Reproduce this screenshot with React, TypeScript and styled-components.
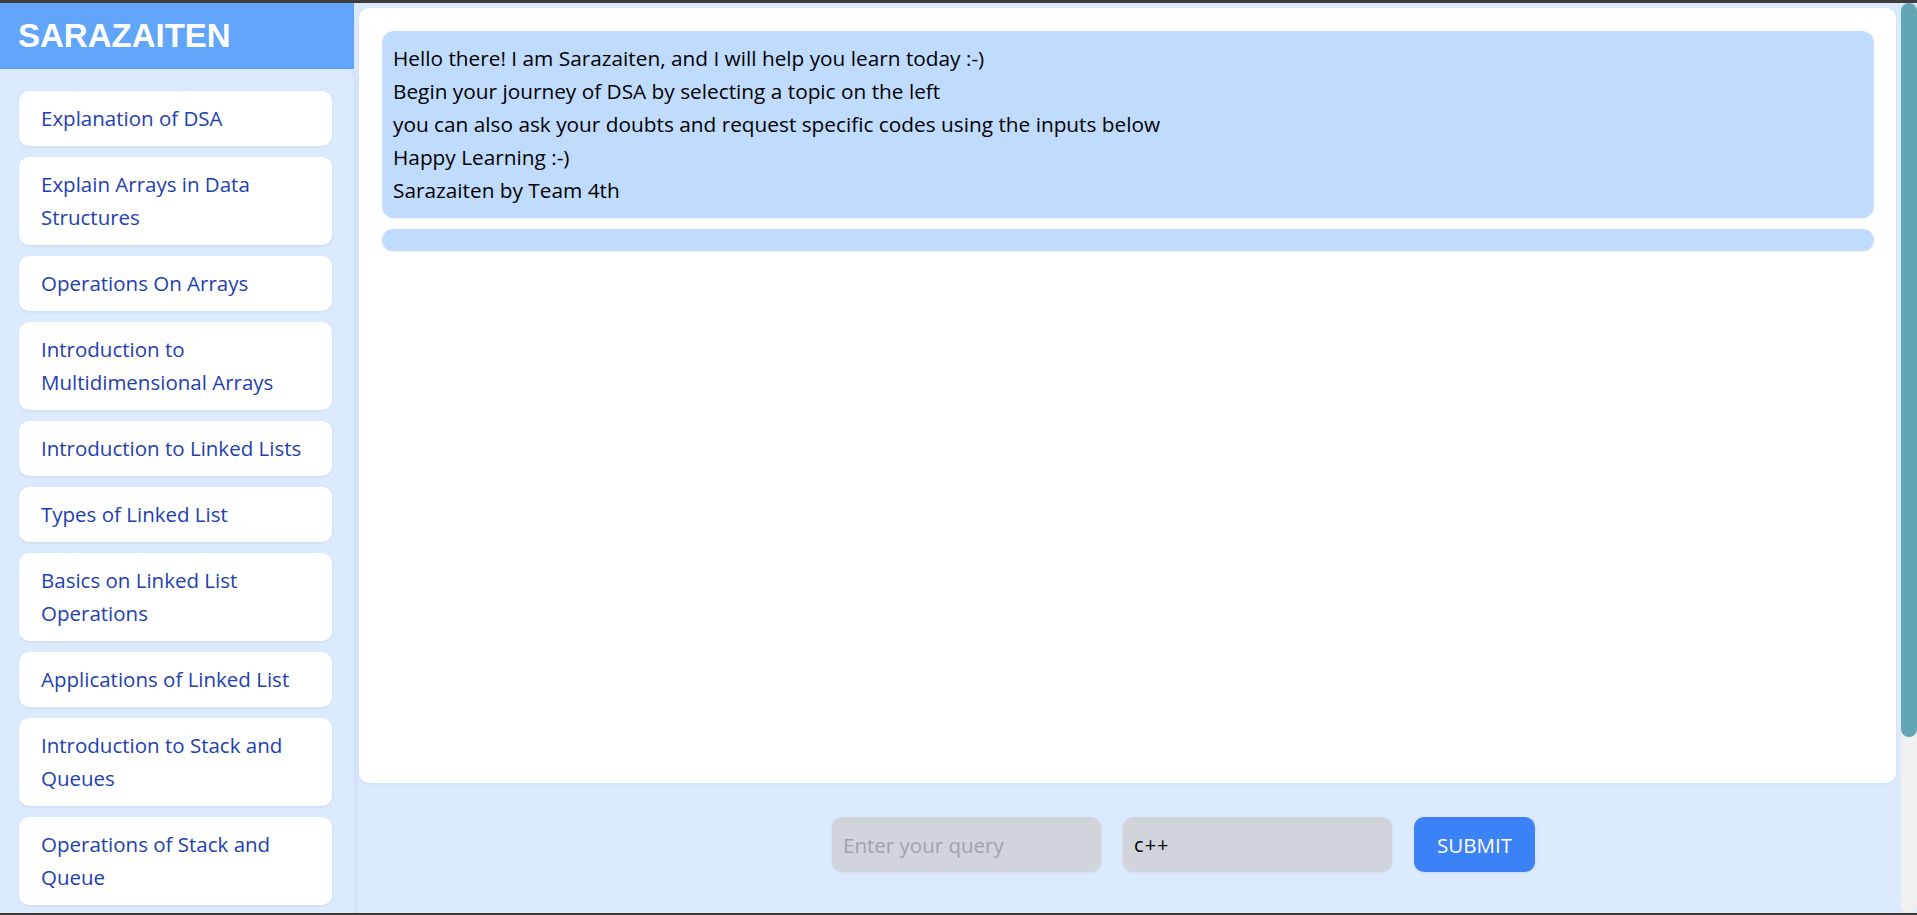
import React from 'react';
import styled, { createGlobalStyle } from 'styled-components';

const topics = [
  'Explanation of DSA',
  'Explain Arrays in Data Structures',
  'Operations On Arrays',
  'Introduction to Multidimensional Arrays',
  'Introduction to Linked Lists',
  'Types of Linked List',
  'Basics on Linked List Operations',
  'Applications of Linked List',
  'Introduction to Stack and Queues',
  'Operations of Stack and Queue',
];

const greeting = [
  'Hello there! I am Sarazaiten, and I will help you learn today :-)',
  'Begin your journey of DSA by selecting a topic on the left',
  'you can also ask your doubts and request specific codes using the inputs below',
  'Happy Learning :-)',
  'Sarazaiten by Team 4th',
];

const GlobalStyle = createGlobalStyle`
  html, body {
    margin: 0;
    padding: 0;
    height: 100%;
    overflow: hidden;
  }
  * {
    box-sizing: border-box;
  }
`;

// window frame: dark edges top and bottom, page + scroll rail in between
const Frame = styled.div`
  height: 100vh;
  display: flex;
  border-top: 3px solid #3d3d3d;
  border-bottom: 2px solid #3a3a3a;
  background: #dbeafe;
  font-family: 'Open Sans', 'Noto Sans', sans-serif;
`;

const Scroller = styled.div`
  flex: 1;
  height: 100%;
  overflow-y: auto;
  scrollbar-width: none;

  &::-webkit-scrollbar {
    display: none;
  }
`;

const Rail = styled.div`
  width: 16px;
  flex-shrink: 0;
  background: #f0f0f0;
  border-radius: 8px;
`;

const Thumb = styled.div`
  height: 734px;
  background: #62a5b5;
  border-radius: 8px;
`;

const Layout = styled.div`
  display: grid;
  grid-template-columns: 354px 1fr;
  align-items: start;
`;

const Sidebar = styled.aside`
  display: flex;
  flex-direction: column;
`;

const Brand = styled.header`
  height: 66px;
  display: flex;
  align-items: center;
  padding-left: 18px;
  background: #60a5fa;

  h1 {
    margin: 0;
    color: #fff;
    font-family: 'Liberation Sans', Arial, sans-serif;
    font-size: 33px;
    font-weight: 700;
  }
`;

const TopicList = styled.nav`
  display: flex;
  flex-direction: column;
  gap: 11px;
  padding: 22px 22px 22px 19px;
  background: #dbeafe;
  border-top-right-radius: 10px;
  box-shadow: 3px 0 4px rgba(30, 64, 175, 0.06);
`;

const TopicCard = styled.button`
  display: block;
  width: 100%;
  padding: 11px 12px 11px 22px;
  border: none;
  border-radius: 10px;
  background: #fff;
  box-shadow: 0 1px 3px rgba(0, 0, 0, 0.08);
  color: #1e40af;
  font-family: inherit;
  font-size: 20.5px;
  line-height: 33px;
  text-align: left;
  cursor: pointer;
`;

const Main = styled.main`
  height: 910px;
  display: flex;
  flex-direction: column;
  padding: 5px;
`;

const ChatPanel = styled.section`
  flex: 1;
  display: flex;
  flex-direction: column;
  gap: 11px;
  padding: 23px 22px 22px 23px;
  background: #fff;
  border-radius: 10px;
  box-shadow: 0 1px 3px rgba(0, 0, 0, 0.06);
`;

const Bubble = styled.div<{ $empty?: boolean }>`
  min-height: ${(p) => (p.$empty ? '21px' : 'auto')};
  padding: 11px 11px;
  background: #bfdbfe;
  border-radius: 12px;
  box-shadow: 0 1px 2px rgba(0, 0, 0, 0.05);
  color: #000;
  font-size: 20.8px;
  line-height: 33px;
`;

const QueryBar = styled.form`
  display: flex;
  justify-content: center;
  gap: 22px;
  padding: 34px 0 36px 112px;
`;

const Field = styled.input`
  width: 269px;
  height: 55px;
  padding: 0 11px;
  border: none;
  border-radius: 10px;
  background: #d1d5db;
  box-shadow: 0 1px 3px rgba(0, 0, 0, 0.06);
  color: #000;
  font-family: inherit;
  font-size: 20.5px;
  outline: none;

  &::placeholder {
    color: #9ca3af;
  }
`;

const LangSelect = styled.select`
  width: 269px;
  height: 55px;
  padding: 0 11px;
  border: none;
  border-radius: 10px;
  background: #d1d5db;
  box-shadow: 0 1px 3px rgba(0, 0, 0, 0.06);
  color: #000;
  font-family: inherit;
  font-size: 20px;
  letter-spacing: 1px;
  appearance: none;
  outline: none;
`;

const SubmitButton = styled.button`
  height: 55px;
  padding: 0 23px;
  border: none;
  border-radius: 10px;
  background: #3b82f6;
  box-shadow: 0 1px 3px rgba(0, 0, 0, 0.08);
  color: #fff;
  font-family: inherit;
  font-size: 20.5px;
  cursor: pointer;
`;

const App = () => {
  return (
    <>
      <GlobalStyle />
      <Frame>
        <Scroller>
          <Layout>
            <Sidebar>
              <Brand>
                <h1>SARAZAITEN</h1>
              </Brand>
              <TopicList>
                {topics.map((topic) => (
                  <TopicCard key={topic} type='button'>
                    {topic}
                  </TopicCard>
                ))}
              </TopicList>
            </Sidebar>

            <Main>
              <ChatPanel>
                <Bubble>
                  {greeting.map((line) => (
                    <div key={line}>{line}</div>
                  ))}
                </Bubble>
                <Bubble $empty />
              </ChatPanel>

              <QueryBar onSubmit={(e) => e.preventDefault()}>
                <Field placeholder='Enter your query' />
                <LangSelect defaultValue='c++'>
                  <option value='c++'>c++</option>
                  <option value='java'>java</option>
                  <option value='python'>python</option>
                </LangSelect>
                <SubmitButton type='submit'>SUBMIT</SubmitButton>
              </QueryBar>
            </Main>
          </Layout>
        </Scroller>
        <Rail>
          <Thumb />
        </Rail>
      </Frame>
    </>
  );
};

export default App;
